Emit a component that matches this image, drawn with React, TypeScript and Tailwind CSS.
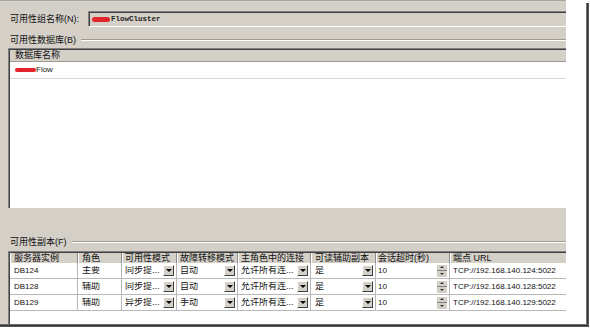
import React from 'react'

const FONT = "font-['Liberation_Sans','Noto_Sans_CJK_SC',sans-serif]"

type Col = { title: string; w: string; pad: string; kind: 'text' | 'combo' | 'spin' }

const columns: Col[] = [
    { title: '服务器实例', w: 'w-[68px]', pad: 'pl-[4px]', kind: 'text' },
    { title: '角色', w: 'w-[44px]', pad: 'pl-[4px]', kind: 'text' },
    { title: '可用性模式', w: 'w-[55px]', pad: 'pl-[3px]', kind: 'combo' },
    { title: '故障转移模式', w: 'w-[61px]', pad: 'pl-[3px]', kind: 'combo' },
    { title: '主角色中的连接', w: 'w-[73px]', pad: 'pl-[3px]', kind: 'combo' },
    { title: '可读辅助副本', w: 'w-[65px]', pad: 'pl-[4px]', kind: 'combo' },
    { title: '会话超时(秒)', w: 'w-[74px]', pad: 'pl-[2px]', kind: 'spin' },
    { title: '端点 URL', w: 'w-[160px]', pad: 'pl-[3px]', kind: 'text' },
]

const replicas = [
    ['DB124', '主要', '同步提...', '自动', '允许所有连...', '是', '10', 'TCP://192.168.140.124:5022'],
    ['DB128', '辅助', '同步提...', '自动', '允许所有连...', '是', '10', 'TCP://192.168.140.128:5022'],
    ['DB129', '辅助', '异步提...', '手动', '允许所有连...', '是', '10', 'TCP://192.168.140.129:5022'],
]

const isCjk = (s: string) => /[\u4e00-\u9fff]/.test(s)

const DropButton = () => (
    <div className="w-[11px] h-[11px] mr-[2px] shrink-0 bg-[#d4d0c8] border-t border-l border-white border-r border-b border-r-[#404040] border-b-[#404040] flex items-center justify-center">
        <div className="w-0 h-0 border-x-[3px] border-x-transparent border-t-[3px] border-t-black" />
    </div>
)

const Spinner = () => (
    <div className="w-[10px] h-[12px] mr-[2px] shrink-0 flex flex-col">
        <div className="flex-1 bg-[#d4d0c8] border-b border-[#808080] flex items-center justify-center">
            <div className="w-0 h-0 border-x-[2px] border-x-transparent border-b-[2px] border-b-[#333]" />
        </div>
        <div className="flex-1 bg-[#d4d0c8] flex items-center justify-center">
            <div className="w-0 h-0 border-x-[2px] border-x-transparent border-t-[2px] border-t-[#333]" />
        </div>
    </div>
)

const GroupTitle = ({ text }: { text: string }) => (
    <div className="h-[12px] flex items-center gap-[5px] pl-[10px]">
        <span className="text-[9px] leading-none text-[#111] whitespace-nowrap">{text}</span>
        <div className="flex-1 border-t border-[#a09c94] border-b border-b-white" />
    </div>
)

const Sunken = ({ className, children }: { className: string; children: React.ReactNode }) => (
    <div className={`${className} border-t border-l border-[#808080]`}>
        <div className="h-full border-t border-l border-[#404040]">{children}</div>
    </div>
)

const App = () => {
    return (
        <div className={`w-[590px] h-[329px] bg-white flex flex-col ${FONT}`}>
            <div className="flex h-[324px]">
                <div className="w-[566px] h-full bg-[#d4d0c8] overflow-hidden border-t border-[#a8a5a0] flex flex-col">
                    {/* name */}
                    <div className="mt-[10px] flex items-center h-[16px]">
                        <span className="w-[88px] shrink-0 pl-[10px] text-[9px] leading-none text-[#111] whitespace-nowrap">可用性组名称(N):</span>
                        <Sunken className="w-[500px] h-[16px] shrink-0 border-b border-b-white">
                            <div className="h-full flex items-center pl-[2px]">
                                <div className="w-[18px] h-[5px] rounded-full bg-[#e3242b]" />
                                <span className="ml-[1px] font-['Liberation_Mono',monospace] font-bold text-[7.5px] leading-none text-[#222]">FlowCluster</span>
                            </div>
                        </Sunken>
                    </div>

                    {/* databases */}
                    <div className="mt-[7px]">
                        <GroupTitle text="可用性数据库(B)" />
                    </div>
                    <Sunken className="mt-[2px] ml-[8px] w-[600px] h-[160px] shrink-0 bg-white">
                        <div className="h-[12px] bg-[#d4d0c8] border-b border-[#a09c94] flex items-center pl-[5px]">
                            <span className="text-[9px] leading-none text-[#111]">数据库名称</span>
                        </div>
                        <div className="h-[17px] bg-white border-b border-[#d6d6d6] flex items-center pl-[5px]">
                            <div className="w-[21px] h-[4px] rounded-full bg-[#e3242b]" />
                            <span className="text-[8px] leading-none text-[#222]">Flow</span>
                        </div>
                    </Sunken>

                    {/* replicas */}
                    <div className="mt-[28px]">
                        <GroupTitle text="可用性副本(F)" />
                    </div>
                    <Sunken className="mt-[3px] ml-[8px] w-[600px] flex-1 bg-white">
                        <div className="flex h-[10px] bg-[#d4d0c8]">
                            {columns.map((c) => (
                                <div key={c.title} className={`${c.w} ${c.pad} shrink-0 h-full border-r border-[#8c8c8c] shadow-[inset_1px_0_0_#fff] flex items-center`}>
                                    <span className="text-[9px] leading-none text-[#111] whitespace-nowrap">{c.title}</span>
                                </div>
                            ))}
                        </div>
                        {replicas.map((row) => (
                            <div key={row[0]} className="flex h-[16px] border-b border-[#b8b8b8] bg-white">
                                {columns.map((c, i) => (
                                    <div key={c.title} className={`${c.w} shrink-0 h-full border-r border-[#b8b8b8] flex items-center`}>
                                        <span className={`${c.pad} flex-1 leading-none text-[#111] whitespace-nowrap overflow-hidden ${isCjk(row[i]) ? 'text-[9px]' : 'text-[8px]'}`}>{row[i]}</span>
                                        {c.kind === 'combo' && <DropButton />}
                                        {c.kind === 'spin' && <Spinner />}
                                    </div>
                                ))}
                            </div>
                        ))}
                    </Sunken>
                </div>
                <div className="w-[20px]" />
                <div className="w-[3px] mt-[3px] bg-linear-to-r from-[#9a9a9a] via-[#333] to-[#6a6a6a]" />
            </div>
            <div className="w-[589px] h-[3px] bg-linear-to-b from-[#8a8a8a] via-[#333] to-[#6a6a6a]" />
        </div>
    )
}

export default App
